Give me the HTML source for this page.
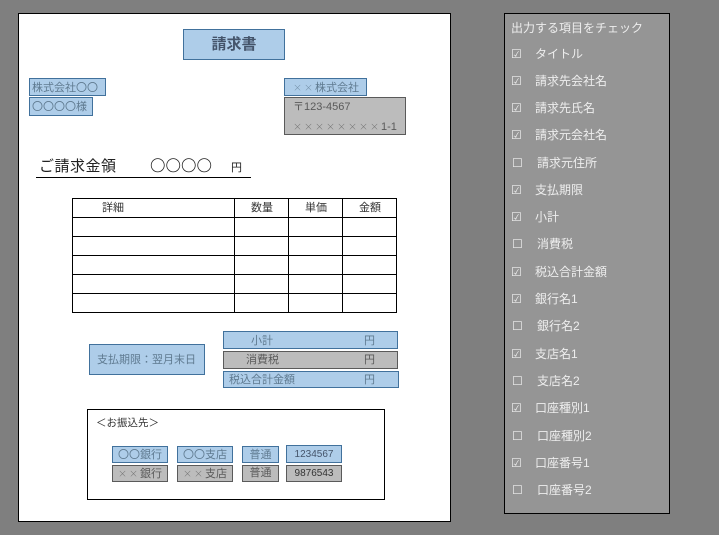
<!DOCTYPE html>
<html lang="ja"><head><meta charset="utf-8"><style>
html,body{margin:0;padding:0}
body{width:719px;height:535px;overflow:hidden;background:#7f7f7f;position:relative;font-family:"Liberation Sans","Noto Sans CJK JP",sans-serif}
div{position:absolute;box-sizing:border-box;white-space:nowrap}
.b{background:#aecde9;border:1px solid #41719c;color:#5f7a90;font-size:11px;line-height:17px}
.g{background:#bcbcbc;border:1px solid #5a5a5a;color:#5a5a5a;font-size:11px;line-height:15px}
.t{color:#333;font-size:11px;line-height:12px}
.c{color:#eee;font-size:12px;line-height:16px}
.h{background:#000}
.j{font-family:"Noto Sans CJK JP",sans-serif;font-size:9px;font-weight:300;letter-spacing:2px;opacity:.8}
.n{font-size:10px}
.r{position:absolute;left:140px}
</style></head><body>
<div style="left:18px;top:13px;width:433px;height:509px;background:#fff;border:1px solid #000"></div>
<div class="b" style="left:183px;top:29px;width:102px;height:31px;font-size:15px;font-weight:bold;line-height:29px;text-align:center;color:#44546a">請求書</div>
<div class="b" style="left:29px;top:78px;width:77px;height:18px;padding-left:2px;line-height:18px">株式会社〇〇</div>
<div class="b" style="left:29px;top:97px;width:64px;height:19px;padding-left:2px;line-height:18px">〇〇〇〇様</div>
<div class="b" style="left:284px;top:78px;width:83px;height:18px;padding-left:8px;line-height:18px"><span class="j">××</span>株式会社</div>
<div class="g" style="left:284px;top:97px;width:122px;height:38px;padding-left:8px;line-height:19px">〒123-4567<br><span class="j">××××××××</span>1-1</div>
<div style="left:39px;top:157px;font-size:15px;letter-spacing:.5px;line-height:20px;color:#222">ご請求金領</div>
<div style="left:150px;top:157px;font-size:15.5px;font-weight:300;line-height:20px;color:#222">〇〇〇〇</div>
<div style="left:231px;top:161px;font-size:11px;line-height:14px;color:#222">円</div>
<div class="h" style="left:36px;top:177px;width:215px;height:1px"></div>
<svg style="position:absolute;left:72px;top:198px" width="325" height="115"><g fill="none" stroke="#000" stroke-width="1" shape-rendering="crispEdges"><rect x=".5" y=".5" width="324" height="114"/><path d="M0 19.5H325M0 38.5H325M0 57.5H325M0 76.5H325M0 95.5H325M162.5 0V115M216.5 0V115M270.5 0V115"/></g></svg>
<div class="t" style="left:102px;top:202px">詳細</div>
<div class="t" style="left:251px;top:202px">数量</div>
<div class="t" style="left:305px;top:202px">単価</div>
<div class="t" style="left:359px;top:202px">金額</div>
<div class="b" style="left:89px;top:344px;width:116px;height:31px;line-height:30px;padding-left:7px">支払期限：翌月末日</div>
<div class="b" style="left:223px;top:331px;width:175px;height:18px;padding-left:27px;line-height:18px">小計<span class="r">円</span></div>
<div class="g" style="left:223px;top:351px;width:175px;height:18px;padding-left:22px;line-height:17px">消費税<span class="r">円</span></div>
<div class="b" style="left:223px;top:371px;width:176px;height:17px;padding-left:5px;line-height:16px">税込合計金額<span class="r">円</span></div>
<div style="left:87px;top:409px;width:298px;height:91px;border:1px solid #000"></div>
<div class="t" style="left:96px;top:417px;font-size:10.5px">＜お振込先＞</div>
<div class="b" style="left:112px;top:446px;width:56px;height:17px;text-align:center">〇〇銀行</div>
<div class="b" style="left:177px;top:446px;width:56px;height:17px;text-align:center">〇〇支店</div>
<div class="b" style="left:242px;top:446px;width:37px;height:17px;text-align:center">普通</div>
<div class="b n" style="left:286px;top:445px;width:56px;height:18px;text-align:center;color:#44546a;line-height:17px">1234567</div>
<div class="g" style="left:112px;top:465px;width:56px;height:17px;text-align:center"><span class="j">××</span>銀行</div>
<div class="g" style="left:177px;top:465px;width:56px;height:17px;text-align:center"><span class="j">××</span>支店</div>
<div class="g" style="left:242px;top:465px;width:37px;height:17px;text-align:center">普通</div>
<div class="g n" style="left:286px;top:465px;width:56px;height:17px;text-align:center;color:#333">9876543</div>
<div style="left:504px;top:13px;width:166px;height:501px;background:#959595;border:1px solid #000"></div>
<div class="c" style="left:511px;top:20px">出力する項目をチェック</div>
<div class="c" style="left:511px;top:46px">☑</div><div class="c" style="left:535px;top:46px">タイトル</div>
<div class="c" style="left:511px;top:73px">☑</div><div class="c" style="left:535px;top:73px">請求先会社名</div>
<div class="c" style="left:511px;top:100px">☑</div><div class="c" style="left:535px;top:100px">請求先氏名</div>
<div class="c" style="left:511px;top:127px">☑</div><div class="c" style="left:535px;top:127px">請求元会社名</div>
<div class="c" style="left:512px;top:155px">☐</div><div class="c" style="left:537px;top:155px">請求元住所</div>
<div class="c" style="left:511px;top:182px">☑</div><div class="c" style="left:535px;top:182px">支払期限</div>
<div class="c" style="left:511px;top:209px">☑</div><div class="c" style="left:535px;top:209px">小計</div>
<div class="c" style="left:512px;top:236px">☐</div><div class="c" style="left:537px;top:236px">消費税</div>
<div class="c" style="left:511px;top:264px">☑</div><div class="c" style="left:535px;top:264px">税込合計金額</div>
<div class="c" style="left:511px;top:291px">☑</div><div class="c" style="left:535px;top:291px">銀行名1</div>
<div class="c" style="left:512px;top:318px">☐</div><div class="c" style="left:537px;top:318px">銀行名2</div>
<div class="c" style="left:511px;top:346px">☑</div><div class="c" style="left:535px;top:346px">支店名1</div>
<div class="c" style="left:512px;top:373px">☐</div><div class="c" style="left:537px;top:373px">支店名2</div>
<div class="c" style="left:511px;top:400px">☑</div><div class="c" style="left:535px;top:400px">口座種別1</div>
<div class="c" style="left:512px;top:428px">☐</div><div class="c" style="left:537px;top:428px">口座種別2</div>
<div class="c" style="left:511px;top:455px">☑</div><div class="c" style="left:535px;top:455px">口座番号1</div>
<div class="c" style="left:512px;top:482px">☐</div><div class="c" style="left:537px;top:482px">口座番号2</div>
</body></html>
